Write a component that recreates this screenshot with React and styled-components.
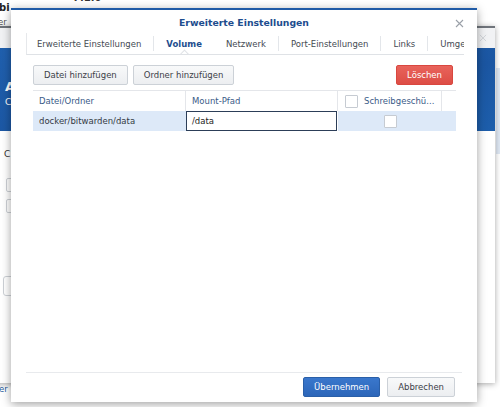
import React from "react";
import styled, { createGlobalStyle } from "styled-components";

const Global = createGlobalStyle`
  html, body { margin: 0; padding: 0; background: #ffffff; }
  body { font-family: "DejaVu Sans", Verdana, sans-serif; }
  * { box-sizing: border-box; }
`;

const Desktop = styled.div`
  position: relative;
  width: 500px;
  height: 407px;
  overflow: hidden;
  background: #ffffff;
  font-family: "DejaVu Sans", Verdana, sans-serif;
`;

const PageText = styled.div`
  position: absolute;
  left: ${(p) => p.x}px;
  top: ${(p) => p.y}px;
  font-size: ${(p) => p.size || 9}px;
  font-weight: ${(p) => (p.bold ? 700 : 400)};
  color: ${(p) => p.color || "#333"};
  white-space: nowrap;
  text-decoration: ${(p) => (p.underline ? "underline" : "none")};
  text-decoration-color: #999;
`;

const SideStrip = styled.div`
  position: absolute;
  left: 496px;
  top: 68px;
  width: 6px;
  height: 86px;
  background: #dfe8f4;
`;

/* background window */
const BackWindow = styled.div`
  position: absolute;
  left: -12px;
  top: 26px;
  width: 507px;
  height: 357px;
  background: #fff;
  border-top: 2px solid #6f747b;
  box-shadow: 0 1px 6px rgba(0, 0, 0, 0.35);
  display: flex;
  flex-direction: column;
`;

const BackTitle = styled.div`
  height: 20px;
  background: #f1f2f4;
  display: flex;
  justify-content: flex-end;
  align-items: center;
  padding-right: 8px;
`;

const BackBanner = styled.div`
  height: 83px;
  background: linear-gradient(170deg, #2060ae 0%, #1b56a2 60%, #1d5eab 100%);
  padding: 32px 0 0 17px;
  color: #fff;
`;

const BannerBig = styled.div`
  font-size: 13px;
  font-weight: 700;
  line-height: 13px;
`;

const BannerSmall = styled.div`
  font-size: 9px;
  line-height: 12px;
  margin-top: 3px;
`;

const BackBody = styled.div`
  padding: 18px 0 0 16px;
  display: flex;
  flex-direction: column;
`;

const BackLabel = styled.div`
  font-size: 9px;
  color: #333;
  line-height: 10px;
`;

const BackInput = styled.div`
  width: 100px;
  height: 14px;
  border: 1px solid #cdd1d6;
  border-radius: 2px;
  margin-left: 2px;
  margin-top: ${(p) => p.mt}px;
`;

const BackButton = styled.div`
  width: 80px;
  height: 20px;
  border: 1px solid #cdd1d6;
  border-radius: 3px;
  margin-left: -1px;
  margin-top: ${(p) => p.mt}px;
`;

/* main dialog */
const Dialog = styled.div`
  position: absolute;
  left: 11px;
  top: 8px;
  width: 466px;
  height: 394px;
  background: #fff;
  border-top: 2px solid #1f5aa6;
  box-shadow: 0 2px 9px rgba(0, 0, 0, 0.38);
  display: flex;
  flex-direction: column;
`;

const Header = styled.div`
  height: 23px;
  display: grid;
  grid-template-columns: 1fr auto 1fr;
  align-items: center;
`;

const Title = styled.div`
  grid-column: 2;
  font-size: 9.3px;
  font-weight: 700;
  color: #1d4d8e;
  padding-top: 1px;
`;

const Close = styled.div`
  grid-column: 3;
  justify-self: end;
  margin-right: 13px;
  padding-top: 3px;
  display: flex;
  align-items: center;
`;

const TabBar = styled.div`
  margin: 0 13px 0 15px;
  height: 22px;
  border-bottom: 1px solid #dfe2e6;
  border-left: 1px solid #e6e8eb;
  display: flex;
  align-items: center;
  overflow: hidden;
  flex-shrink: 0;
`;

const Tab = styled.div`
  position: relative;
  flex-shrink: 0;
  height: 100%;
  display: flex;
  align-items: center;
  padding: 0 12px 0 ${(p) => (p.first ? 10 : 12)}px;
  font-size: 8.5px;
  white-space: nowrap;
  color: ${(p) => (p.active ? "#1d4d8e" : "#444a52")};
  font-weight: ${(p) => (p.active ? 700 : 400)};
  ${(p) =>
    p.active &&
    `
    &::after {
      content: "";
      position: absolute;
      left: 50%;
      bottom: -4px;
      width: 6px;
      height: 6px;
      margin-left: -3px;
      background: #fff;
      border-left: 1px solid #dfe2e6;
      border-top: 1px solid #dfe2e6;
      transform: rotate(45deg);
    }
  `}
`;

const TabSep = styled.div`
  width: 1px;
  height: 15px;
  background: #e3e6ea;
  flex-shrink: 0;
`;

const Toolbar = styled.div`
  margin: 10px 24px 0 22px;
  display: flex;
  gap: 5px;
  align-items: center;
`;

const Button = styled.button`
  height: 20px;
  padding: 0 ${(p) => p.px || 10}px;
  font-family: inherit;
  font-size: 8.5px;
  border-radius: 2px;
  cursor: pointer;
  white-space: nowrap;
  border: 1px solid
    ${(p) =>
      p.variant === "danger" ? "#d9473f" : p.variant === "primary" ? "#2a5fa8" : "#ccd1d7"};
  color: ${(p) => (p.variant ? "#fff" : "#3c4148")};
  background: ${(p) =>
    p.variant === "danger"
      ? "linear-gradient(#e8635b, #dd4d45)"
      : p.variant === "primary"
      ? "linear-gradient(#3a77cc, #2c66b9)"
      : "linear-gradient(#f8f9fa, #eceef1)"};
  margin-left: ${(p) => (p.push ? "auto" : "0")};
`;

const Table = styled.div`
  margin: 5px 21px 0 22px;
  border-top: 1px solid #e4e6ea;
  display: grid;
  grid-template-columns: 153px 152px 104px 1fr;
`;

const HeadCell = styled.div`
  height: 20px;
  display: flex;
  align-items: center;
  gap: 6px;
  padding-left: ${(p) => p.pl || 6}px;
  font-size: 8.5px;
  color: #3a5b88;
  border-right: ${(p) => (p.sep ? "1px solid #e4e6ea" : "none")};
  white-space: nowrap;
`;

const Cell = styled.div`
  height: 20px;
  display: flex;
  align-items: center;
  justify-content: ${(p) => (p.center ? "center" : "flex-start")};
  padding-left: ${(p) => (p.center ? 0 : 6)}px;
  font-size: 8.5px;
  color: #333a44;
  background: #dde9f8;
  white-space: nowrap;
`;

const InputCell = styled.div`
  height: 20px;
  display: flex;
  align-items: center;
  padding-left: 5px;
  font-size: 8.5px;
  color: #222;
  background: #fff;
  border: 1px solid #2c3e58;
  margin-right: 1px;
`;

const Checkbox = styled.div`
  width: 13px;
  height: 13px;
  background: #fff;
  border: 1px solid #c6cbd2;
  border-radius: 1px;
  flex-shrink: 0;
`;

const Spacer = styled.div`
  flex: 1;
`;

const Footer = styled.div`
  margin: 0 15px;
  border-top: 1px solid #e8eaed;
  padding: 4px 7px 5px 0;
  display: flex;
  justify-content: flex-end;
  gap: 7px;
`;

const CloseIcon = ({ color, size = 9 }) => (
  <svg width={size} height={size} viewBox="0 0 9 9">
    <path d="M1 1 L8 8 M8 1 L1 8" stroke={color} strokeWidth="1.1" fill="none" />
  </svg>
);

export default function App() {
  return (
    <>
      <Global />
      <Desktop>
        <PageText x={-1} y={2} size={10} bold color="#222">
          bi
        </PageText>
        <PageText x={73} y={-8} size={10} bold color="#333">
          7.1.0
        </PageText>
        <PageText x={-2} y={17} size={8.5} color="#555" underline>
          er
        </PageText>
        <PageText x={-1} y={384} size={8.5} color="#2b5d9e">
          er
        </PageText>
        <SideStrip />

        <BackWindow>
          <BackTitle>
            <CloseIcon color="#d3d6da" size={8} />
          </BackTitle>
          <BackBanner>
            <BannerBig>A</BannerBig>
            <BannerSmall>C</BannerSmall>
          </BackBanner>
          <BackBody>
            <BackLabel>C</BackLabel>
            <BackInput mt={19} />
            <BackInput mt={7} />
            <BackButton mt={63} />
          </BackBody>
        </BackWindow>

        <Dialog>
          <Header>
            <Title>Erweiterte Einstellungen</Title>
            <Close>
              <CloseIcon color="#9aa0a8" />
            </Close>
          </Header>

          <TabBar>
            <Tab first>Erweiterte Einstellungen</Tab>
            <TabSep />
            <Tab active>Volume</Tab>
            <Tab>Netzwerk</Tab>
            <TabSep />
            <Tab>Port-Einstellungen</Tab>
            <TabSep />
            <Tab>Links</Tab>
            <TabSep />
            <Tab>Umgebung</Tab>
          </TabBar>

          <Toolbar>
            <Button>Datei hinzufügen</Button>
            <Button>Ordner hinzufügen</Button>
            <Button variant="danger" push px={10}>
              Löschen
            </Button>
          </Toolbar>

          <Table>
            <HeadCell sep>Datei/Ordner</HeadCell>
            <HeadCell sep>Mount-Pfad</HeadCell>
            <HeadCell sep pl={7}>
              <Checkbox />
              Schreibgeschü...
            </HeadCell>
            <HeadCell />
            <Cell>docker/bitwarden/data</Cell>
            <InputCell>/data</InputCell>
            <Cell center>
              <Checkbox />
            </Cell>
            <Cell />
          </Table>

          <Spacer />

          <Footer>
            <Button variant="primary" px={10}>
              Übernehmen
            </Button>
            <Button px={10}>Abbrechen</Button>
          </Footer>
        </Dialog>
      </Desktop>
    </>
  );
}
